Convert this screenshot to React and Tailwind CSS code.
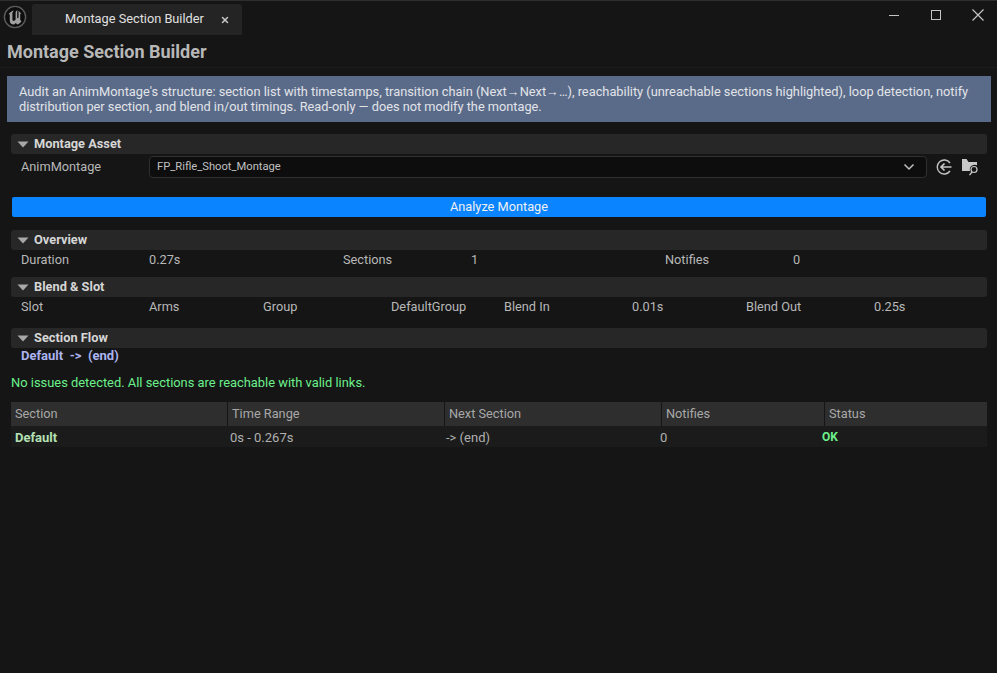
import { X } from 'lucide-react'

function Caret() {
  return (
    <svg width="12" height="7" viewBox="0 0 12 7" className="shrink-0">
      <path d="M0.5 0.5h11L6 6.5z" fill="#a8a8a8" />
    </svg>
  )
}

function UnrealLogo() {
  return (
    <svg width="24" height="24" viewBox="0 0 24 24" className="shrink-0">
      <circle cx="12" cy="12" r="10.6" fill="#0d0d0d" stroke="#5c5c5c" strokeWidth="1.4" />
      <path
        d="M5.500 9.200C6.800 7.300 8.600 6 11 5.400 9.900 6.300 9.400 7.200 9.400 8.400V14.600C9.400 16 10.600 16.400 11.600 15.600L12.600 14.800V7.800C12.600 6.900 13 6 14 5.400L14.600 5.600C14.300 6.200 14.200 6.800 14.200 7.400V13.600L15.600 12.600V7.600C15.600 7 15.400 6.600 15 6 16.600 6.600 17.600 7.600 18.400 9 17.900 8.800 17.600 8.700 17.200 8.800V15L18.500 16.200C17.500 17.800 16 19 14.400 19.600L12.800 18 11 19.600C8.200 19.400 6.800 18 6.800 15.800V9.400C6.400 9.100 6 9.100 5.500 9.200Z"
        fill="#a0a0a0"
      />
    </svg>
  )
}

function TitleBar() {
  return (
    <div className="h-[36px] shrink-0 flex items-start border-t border-[#2e2e2e]">
      <div className="ml-[3px] mt-[4px]">
        <UnrealLogo />
      </div>
      <div className="ml-[5px] mt-[3px] w-[210px] h-[31px] rounded-t-[3px] bg-[#242424] flex items-center pl-[33px] text-[#e0e0e0]">
        <span>Montage Section Builder</span>
        <X size={10} strokeWidth={3.5} className="ml-[16px] text-[#c8c8c8]" />
      </div>
      <div className="ml-auto flex items-center mt-[7px] text-[#c4c4c4]">
        <svg width="12" height="12" viewBox="0 0 12 12">
          <path d="M1 6.500h10" stroke="currentColor" strokeWidth="1" />
        </svg>
        <svg width="12" height="12" viewBox="0 0 12 12" className="ml-[30px]">
          <rect x="1.500" y="1.500" width="9" height="9" fill="none" stroke="currentColor" strokeWidth="1" />
        </svg>
        <svg width="14" height="14" viewBox="0 0 14 14" className="ml-[29px] mr-[12px]">
          <path d="M1.500 1.500l11 11M12.500 1.500l-11 11" stroke="currentColor" strokeWidth="1.200" />
        </svg>
      </div>
    </div>
  )
}

function SectionHeader({ title }) {
  return (
    <div className="ml-[11px] mr-[10px] h-[20px] rounded-[3px] bg-[#272727] flex items-center pl-[6px] gap-[5px]">
      <Caret />
      <span className="font-bold text-[12.8px] text-[#d6d6d6]">{title}</span>
    </div>
  )
}

function AssetRow() {
  return (
    <div className="flex items-center h-[24px] mt-[1px] pl-[21px]">
      <div className="w-[128px] text-[#b8b8b8]">AnimMontage</div>
      <div className="w-[778px] h-[22px] rounded-[4px] border border-[#303030] bg-[#0d0d0d] flex items-center pl-[7px] pr-[11px]">
        <span className="text-[11.2px] text-[#c0c0c0]">FP_Rifle_Shoot_Montage</span>
        <svg width="12" height="8" viewBox="0 0 12 8" className="ml-auto">
          <path d="M1.500 1.500L6 6l4.500-4.500" fill="none" stroke="#c0c0c0" strokeWidth="1.500" />
        </svg>
      </div>
      <svg width="16" height="16" viewBox="0 0 16 16" className="ml-[9px]">
        <path d="M14 4A7 7 0 1 0 14 12" fill="none" stroke="#c4c4c4" strokeWidth="1.400" />
        <path d="M15.500 8H5M8.500 4.500L5 8l3.500 3.500" fill="none" stroke="#c4c4c4" strokeWidth="1.700" />
      </svg>
      <svg width="17" height="17" viewBox="0 0 17 17" className="ml-[10px]">
        <path d="M0 0h4.500l2 3h8.500v3.200a5 5 0 0 0-7 5.800H0z" fill="#c8c8c8" />
        <circle cx="12" cy="10.500" r="3" fill="none" stroke="#c8c8c8" strokeWidth="1.200" />
        <path d="M10 13l-2.500 3.200" stroke="#c8c8c8" strokeWidth="1.300" />
      </svg>
    </div>
  )
}

function Overview() {
  return (
    <div className="grid grid-cols-[128px_194px_128px_194px_128px_1fr] h-[19px] pt-[1px] items-center pl-[21px] text-[#b8b8b8]">
      <div>Duration</div>
      <div>0.27s</div>
      <div>Sections</div>
      <div>1</div>
      <div>Notifies</div>
      <div>0</div>
    </div>
  )
}

function BlendSlot() {
  return (
    <div className="grid grid-cols-[128px_114px_128px_113px_128px_114px_128px_1fr] h-[19px] pt-[1px] items-center pl-[21px] text-[#b8b8b8]">
      <div>Slot</div>
      <div>Arms</div>
      <div>Group</div>
      <div>DefaultGroup</div>
      <div>Blend In</div>
      <div>0.01s</div>
      <div>Blend Out</div>
      <div>0.25s</div>
    </div>
  )
}

function SectionTable() {
  return (
    <div className="ml-[11px] mr-[10px] mt-[12px] text-[#b0b0b0]">
      <div className="grid grid-cols-[217px_217px_217px_163px_1fr] h-[24px] bg-[#2e2e2e] text-[#a8a8a8]">
        <div className="pl-[4px] flex items-center border-r border-[#151515]">Section</div>
        <div className="pl-[4px] flex items-center border-r border-[#151515]">Time Range</div>
        <div className="pl-[4px] flex items-center border-r border-[#151515]">Next Section</div>
        <div className="pl-[4px] flex items-center border-r border-[#151515]">Notifies</div>
        <div className="pl-[4px] flex items-center">Status</div>
      </div>
      <div className="grid grid-cols-[215px_216px_214px_162px_1fr] h-[21px] pt-[2px] items-center bg-[#1b1b1b] text-[13px]">
        <div className="pl-[4px] font-bold text-[#b4e0b4]">Default</div>
        <div className="pl-[4px]">0s - 0.267s</div>
        <div className="pl-[4px]">-&gt; (end)</div>
        <div className="pl-[4px]">0</div>
        <div className="pl-[4px] pb-[2px] font-bold text-[12px] text-[#6cf08c]">OK</div>
      </div>
    </div>
  )
}

export default function App() {
  return (
    <div className="h-[673px] bg-[#151515] overflow-hidden flex flex-col font-['Roboto',sans-serif] text-[12.75px] leading-none">
      <TitleBar />
      <h1 className="h-[32px] shrink-0 pl-[7px] flex items-center font-bold text-[18px] text-[#b8b8b8] border-b border-[#1b1b1b]">
        Montage Section Builder
      </h1>
      <div className="ml-[7px] mr-[6px] mt-[8px] h-[46px] bg-[#5a6b8a] px-[12px] flex flex-col justify-center text-[12.82px] text-[#e2e4e8] leading-[15px]">
        <p>Audit an AnimMontage's structure: section list with timestamps, transition chain (Next→Next→…), reachability (unreachable sections highlighted), loop detection, notify</p>
        <p className="text-[12.75px]">distribution per section, and blend in/out timings. Read-only — does not modify the montage.</p>
      </div>
      <div className="mt-[12px]">
        <SectionHeader title="Montage Asset" />
        <AssetRow />
      </div>
      <button className="ml-[12px] mr-[11px] mt-[18px] h-[20px] shrink-0 rounded-[2px] bg-[#0a84ff] text-[#f0f0f0]">
        Analyze Montage
      </button>
      <div className="mt-[13px]">
        <SectionHeader title="Overview" />
        <Overview />
      </div>
      <div className="mt-[8px]">
        <SectionHeader title="Blend & Slot" />
        <BlendSlot />
      </div>
      <div className="mt-[12px]">
        <SectionHeader title="Section Flow" />
        <div className="pl-[21px] h-[15px] flex items-center font-bold text-[13px] text-[#aab4f0] whitespace-pre">
          Default  -&gt;  (end)
        </div>
      </div>
      <div className="pl-[11px] mt-[12px] h-[15px] pt-[1px] flex items-center text-[12.9px] text-[#6cf08c]">
        No issues detected. All sections are reachable with valid links.
      </div>
      <SectionTable />
    </div>
  )
}
